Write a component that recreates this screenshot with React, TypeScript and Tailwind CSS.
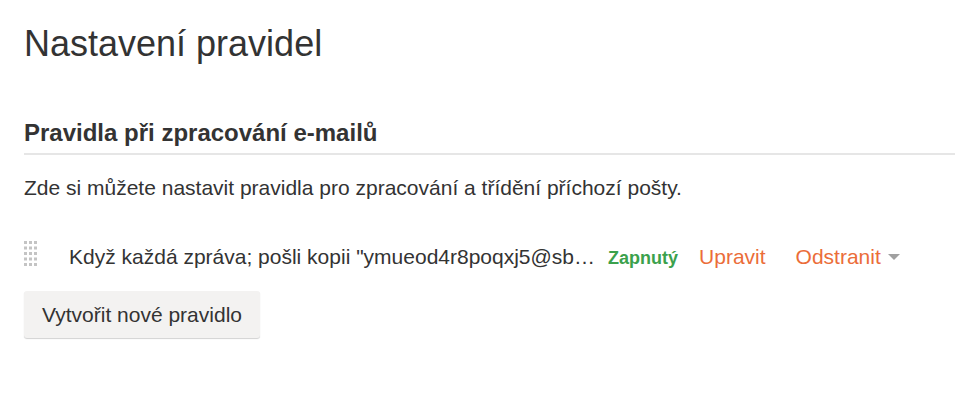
import React from "react";

function DragHandle() {
  const dots = [];
  for (let r = 0; r < 5; r++) {
    for (let c = 0; c < 3; c++) {
      dots.push(<rect key={`${r}-${c}`} x={c * 5} y={r * 5.5} width="3" height="3" fill="#c4c4c4" />);
    }
  }
  return (
    <svg width="14" height="26" viewBox="0 0 14 26" className="shrink-0">
      {dots}
    </svg>
  );
}

export default function App() {
  return (
    <div className="min-h-[418px] bg-white pl-6 pt-6 font-['Liberation_Sans',Arial,sans-serif] text-[#333]">
      <h1 className="text-[36px] leading-[40px] font-normal">Nastavení pravidel</h1>
      <h2 className="mt-[55px] border-b-2 border-[#e6e6e6] pb-[6px] text-[24px] font-bold leading-[28px]">
        Pravidla při zpracování e-mailů
      </h2>
      <p className="mt-[21px] text-[21px] leading-[24px]">
        Zde si můžete nastavit pravidla pro zpracování a třídění příchozí pošty.
      </p>
      <div className="mt-[41px] flex items-start">
        <DragHandle />
        <div className="ml-[31px] mt-[4px] flex items-baseline text-[21px] leading-[24px] whitespace-nowrap">
          <span>Když každá zpráva; pošli kopii "ymueod4r8poqxj5@sb…</span>
          <span className="ml-[13px] text-[18px] font-bold text-[#3ba14c]">Zapnutý</span>
          <span className="ml-[21px] text-[#eb6d39]">Upravit</span>
          <span className="ml-[30px] text-[#eb6d39]">Odstranit</span>
          <svg width="12" height="7" viewBox="0 0 12 7" className="ml-[7px] self-center">
            <path d="M0 0 L12 0 L6 6 Z" fill="#a0a0a0" />
          </svg>
        </div>
      </div>
      <button className="mt-[21px] flex h-[47px] items-center whitespace-nowrap rounded-[3px] bg-[#f3f2f1] px-[18px] text-[21px] leading-[24px] text-[#333] shadow-[0_1px_1px_rgba(0,0,0,0.18)]">
        Vytvořit nové pravidlo
      </button>
    </div>
  );
}
